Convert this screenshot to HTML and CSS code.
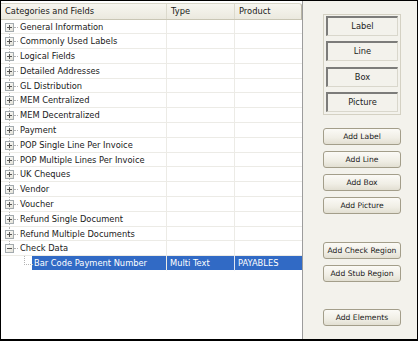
FILE: index.html
```html
<!DOCTYPE html>
<html>
<head>
<meta charset="utf-8">
<link rel="stylesheet" href="styles.css">
</head>
<body>
<div class="window">
  <div class="list">
    <div class="head">
      <div class="hc c1">Categories and Fields</div>
      <div class="hc c2">Type</div>
      <div class="hc c3">Product</div>
    </div>
    <div class="rows">
      <div class="row"><div class="cell c1 node first"><span class="exp plus"></span><span class="lbl">General Information</span></div><div class="cell c2"></div><div class="cell c3"></div></div>
      <div class="row"><div class="cell c1 node"><span class="exp plus"></span><span class="lbl">Commonly Used Labels</span></div><div class="cell c2"></div><div class="cell c3"></div></div>
      <div class="row"><div class="cell c1 node"><span class="exp plus"></span><span class="lbl">Logical Fields</span></div><div class="cell c2"></div><div class="cell c3"></div></div>
      <div class="row"><div class="cell c1 node"><span class="exp plus"></span><span class="lbl">Detailed Addresses</span></div><div class="cell c2"></div><div class="cell c3"></div></div>
      <div class="row"><div class="cell c1 node"><span class="exp plus"></span><span class="lbl">GL Distribution</span></div><div class="cell c2"></div><div class="cell c3"></div></div>
      <div class="row"><div class="cell c1 node"><span class="exp plus"></span><span class="lbl">MEM Centralized</span></div><div class="cell c2"></div><div class="cell c3"></div></div>
      <div class="row"><div class="cell c1 node"><span class="exp plus"></span><span class="lbl">MEM Decentralized</span></div><div class="cell c2"></div><div class="cell c3"></div></div>
      <div class="row"><div class="cell c1 node"><span class="exp plus"></span><span class="lbl">Payment</span></div><div class="cell c2"></div><div class="cell c3"></div></div>
      <div class="row"><div class="cell c1 node"><span class="exp plus"></span><span class="lbl">POP Single Line Per Invoice</span></div><div class="cell c2"></div><div class="cell c3"></div></div>
      <div class="row"><div class="cell c1 node"><span class="exp plus"></span><span class="lbl">POP Multiple Lines Per Invoice</span></div><div class="cell c2"></div><div class="cell c3"></div></div>
      <div class="row"><div class="cell c1 node"><span class="exp plus"></span><span class="lbl">UK Cheques</span></div><div class="cell c2"></div><div class="cell c3"></div></div>
      <div class="row"><div class="cell c1 node"><span class="exp plus"></span><span class="lbl">Vendor</span></div><div class="cell c2"></div><div class="cell c3"></div></div>
      <div class="row"><div class="cell c1 node"><span class="exp plus"></span><span class="lbl">Voucher</span></div><div class="cell c2"></div><div class="cell c3"></div></div>
      <div class="row"><div class="cell c1 node"><span class="exp plus"></span><span class="lbl">Refund Single Document</span></div><div class="cell c2"></div><div class="cell c3"></div></div>
      <div class="row"><div class="cell c1 node"><span class="exp plus"></span><span class="lbl">Refund Multiple Documents</span></div><div class="cell c2"></div><div class="cell c3"></div></div>
      <div class="row"><div class="cell c1 node last"><span class="exp minus"></span><span class="lbl">Check Data</span></div><div class="cell c2"></div><div class="cell c3"></div></div>
      <div class="row selected"><div class="cell c1 child"><span class="lbl">Bar Code Payment Number</span></div><div class="cell c2">Multi Text</div><div class="cell c3">PAYABLES</div></div>
    </div>
  </div>
  <div class="side">
    <div class="group">
      <div class="tool">Label</div>
      <div class="tool">Line</div>
      <div class="tool">Box</div>
      <div class="tool">Picture</div>
    </div>
    <div class="btns">
      <button class="btn">Add Label</button>
      <button class="btn">Add Line</button>
      <button class="btn">Add Box</button>
      <button class="btn">Add Picture</button>
    </div>
    <div class="btns regions">
      <button class="btn">Add Check Region</button>
      <button class="btn">Add Stub Region</button>
    </div>
    <div class="btns elements">
      <button class="btn">Add Elements</button>
    </div>
  </div>
</div>
</body>
</html>
```

FILE: styles.css
```css
* { box-sizing: border-box; }
html, body { margin: 0; padding: 0; }
body {
  font-family: "DejaVu Sans", "Liberation Sans", sans-serif;
  font-size: 8.3px;
  color: #1a1a1a;
  background: #000;
}
.window {
  width: 418px;
  height: 341px;
  border-top: 1px solid #000;
  border-left: 1px solid #000;
  border-right: 1px solid #000;
  border-bottom: 2px solid #000;
  display: flex;
  background: #f3f2ec;
}
.list {
  width: 302px;
  background: #fff;
  border-right: 1px solid #9c9c9c;
  padding-top: 2px;
  display: flex;
  flex-direction: column;
}
.head {
  display: grid;
  grid-template-columns: 166px 68px 67px;
  height: 16.5px;
  background: linear-gradient(#f7f6f0, #ebe9df);
  border-top: 1px solid #d8d6c8;
  border-bottom: 1px solid #c9c6b5;
  border-right: 1px solid #b9b6a6;
  border-top-right-radius: 3px;
}
.hc {
  line-height: 15px;
  padding-left: 4px;
  border-right: 1px solid #dcdacd;
  white-space: nowrap;
}
.hc.c3 { border-right: none; }
.rows { display: flex; flex-direction: column; }
.row {
  display: grid;
  grid-template-columns: 166px 68px 67px;
  height: 14.8px;
}
.cell {
  height: 14.8px;
  line-height: 15.4px;
  border-right: 1px solid #ecebe6;
  border-bottom: 1px solid #ecebe6;
  padding-left: 3px;
  white-space: nowrap;
  overflow: hidden;
}
.cell.c3 { border-right: none; }
.cell.c1 {
  position: relative;
  padding-left: 18px;
  display: flex;
}
.node::before {
  content: "";
  position: absolute;
  left: 8px;
  top: 0;
  bottom: -1px;
  border-left: 1px dotted #b4b4b4;
}
.node.first::before { top: 7px; }
.node.last::before { bottom: 7px; }
.node::after {
  content: "";
  position: absolute;
  left: 13px;
  width: 4px;
  top: 7px;
  border-top: 1px dotted #b4b4b4;
}
.exp {
  position: absolute;
  left: 4px;
  top: 3px;
  width: 9px;
  height: 9px;
  border: 1px solid #a3aaae;
  background: linear-gradient(135deg, #fff, #e4e2d8);
  z-index: 1;
}
.exp::before {
  content: "";
  position: absolute;
  left: 1px;
  top: 3px;
  width: 5px;
  height: 1px;
  background: #555;
}
.exp.plus::after {
  content: "";
  position: absolute;
  left: 3px;
  top: 1px;
  width: 1px;
  height: 5px;
  background: #555;
}
.child { padding-left: 31px !important; }
.child::before {
  content: "";
  position: absolute;
  left: 23px;
  top: 0;
  height: 8px;
  width: 8px;
  border-left: 1px dotted #b4b4b4;
  border-bottom: 1px dotted #b4b4b4;
}
.lbl { padding-left: 1px; }
.selected .cell { border-bottom-color: #fff; }
.selected .child .lbl {
  flex: 1;
  background: #316ac5;
  color: #fff;
  padding-left: 2px;
}
.selected .c2, .selected .c3 {
  background: #316ac5;
  color: #fff;
  border-right-color: #dfe6f3;
}
.side {
  flex: 1;
  padding-left: 20px;
  padding-top: 13px;
  display: flex;
  flex-direction: column;
}
.group {
  width: 78px;
  border: 1px solid #d4d1c3;
  padding: 1px 2px 2px 2px;
  display: flex;
  flex-direction: column;
  gap: 5.3px;
}
.tool {
  height: 20px;
  line-height: 17px;
  text-align: center;
  border-top: 2px solid #7c7c7a;
  border-left: 2px solid #7c7c7a;
  border-right: 1px solid #d9d7cc;
  border-bottom: 1px solid #d9d7cc;
  color: #222;
}
.btns {
  margin-top: 13px;
  display: flex;
  flex-direction: column;
  gap: 6px;
}
.btns.regions { margin-top: 28px; }
.btns.elements { margin-top: 27px; }
.btn {
  width: 78px;
  height: 17px;
  padding: 0;
  font-family: inherit;
  font-size: 7.6px;
  color: #1a1a1a;
  border: 1px solid #a39e8a;
  border-radius: 3px;
  background: linear-gradient(#fbfaf6, #f0eee5 60%, #e2dfd2);
  line-height: 15px;
  text-align: center;
  white-space: nowrap;
}
```
